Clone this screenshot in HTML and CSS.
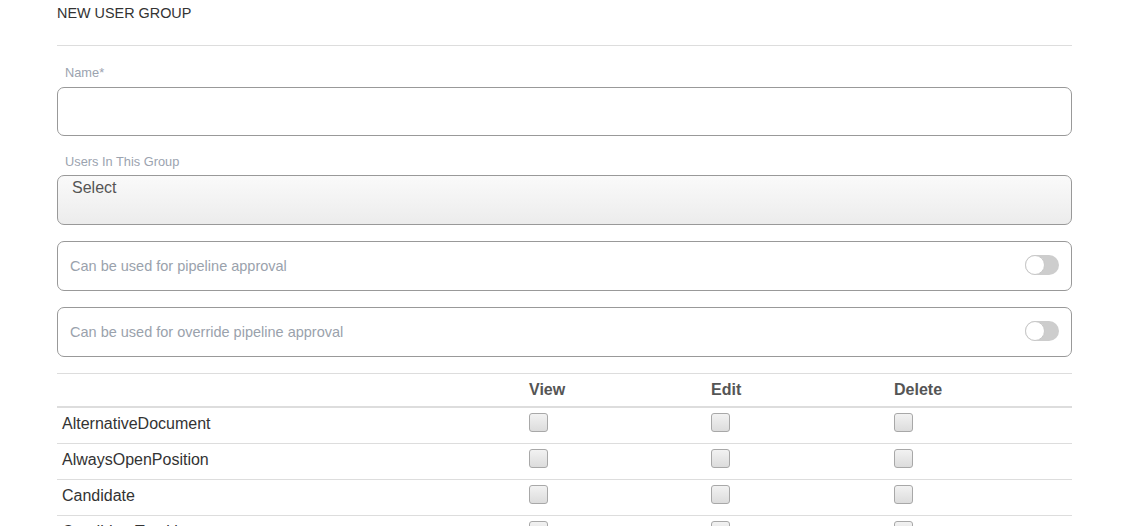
FILE: index.html
```html
<!DOCTYPE html>
<html>
<head>
<meta charset="utf-8">
<link rel="stylesheet" href="styles.css">
</head>
<body>
<div class="page">
  <div class="title">NEW USER GROUP</div>
  <div class="label label-name">Name*</div>
  <div class="input"></div>
  <div class="label label-users">Users In This Group</div>
  <div class="select">Select</div>
  <div class="toggle-row"><span>Can be used for pipeline approval</span><span class="switch"><span class="knob"></span></span></div>
  <div class="toggle-row"><span>Can be used for override pipeline approval</span><span class="switch"><span class="knob"></span></span></div>
  <div class="table">
    <div class="row head">
      <div class="cell name"></div>
      <div class="cell">View</div>
      <div class="cell">Edit</div>
      <div class="cell">Delete</div>
    </div>
    <div class="row">
      <div class="cell name">AlternativeDocument</div>
      <div class="cell"><span class="cb"></span></div>
      <div class="cell"><span class="cb"></span></div>
      <div class="cell"><span class="cb"></span></div>
    </div>
    <div class="row">
      <div class="cell name">AlwaysOpenPosition</div>
      <div class="cell"><span class="cb"></span></div>
      <div class="cell"><span class="cb"></span></div>
      <div class="cell"><span class="cb"></span></div>
    </div>
    <div class="row">
      <div class="cell name">Candidate</div>
      <div class="cell"><span class="cb"></span></div>
      <div class="cell"><span class="cb"></span></div>
      <div class="cell"><span class="cb"></span></div>
    </div>
    <div class="row">
      <div class="cell name">CandidateTracking</div>
      <div class="cell"><span class="cb"></span></div>
      <div class="cell"><span class="cb"></span></div>
      <div class="cell"><span class="cb"></span></div>
    </div>
  </div>
</div>
</body>
</html>
```

FILE: styles.css
```css
html, body {
  margin: 0;
  padding: 0;
  background: #fff;
  overflow: hidden;
}
body {
  font-family: "Liberation Sans", Arial, sans-serif;
  color: #333;
}
.page {
  margin-left: 57px;
  width: 1015px;
}
.title {
  height: 46px;
  box-sizing: border-box;
  padding-top: 4px;
  font-size: 14.4px;
  line-height: 18px;
  color: #333;
  border-bottom: 1px solid #ddd;
}
.label {
  font-size: 12.8px;
  line-height: 16px;
  color: #9ba3af;
  padding-left: 8px;
}
.label-name {
  margin-top: 19px;
  margin-bottom: 6px;
}
.input {
  height: 49px;
  box-sizing: border-box;
  border: 1px solid #999;
  border-radius: 7px;
  background: #fff;
}
.label-users {
  margin-top: 18px;
  margin-bottom: 5px;
}
.select {
  height: 50px;
  box-sizing: border-box;
  border: 1px solid #999;
  border-radius: 7px;
  background: linear-gradient(#fafafa, #ececec);
  padding: 3px 14px;
  font-size: 16px;
  line-height: 18px;
  color: #555;
}
.toggle-row {
  height: 50px;
  box-sizing: border-box;
  border: 1px solid #999;
  border-radius: 7px;
  margin-top: 16px;
  padding: 0 12px;
  display: flex;
  align-items: center;
  justify-content: space-between;
  font-size: 14.5px;
  color: #9aa2ac;
}
.switch {
  width: 34px;
  height: 20px;
  border-radius: 10px;
  background: #cdcdcd;
  position: relative;
  margin-top: -2px;
}
.knob {
  position: absolute;
  left: 0;
  top: 0;
  width: 18px;
  height: 18px;
  border-radius: 50%;
  background: #fff;
  border: 1px solid #c8c8c8;
}
.table {
  margin-top: 16px;
  border-top: 1px solid #ddd;
}
.row {
  display: grid;
  grid-template-columns: 467px 182px 183px 183px;
  height: 36px;
  box-sizing: border-box;
  border-bottom: 1px solid #ddd;
}
.row.head {
  height: 34px;
  border-bottom: 2px solid #ddd;
}
.cell {
  padding-left: 5px;
  font-size: 16px;
  line-height: 19px;
  padding-top: 6px;
  color: #333;
}
.head .cell {
  font-weight: bold;
  color: #555;
  padding-top: 6px;
}
.cell .cb {
  display: block;
  width: 19px;
  height: 19px;
  box-sizing: border-box;
  border: 1px solid #a8a8a8;
  border-radius: 3px;
  background: linear-gradient(#f2f2f2, #dcdcdc);
  margin-top: -1px;
}
```
